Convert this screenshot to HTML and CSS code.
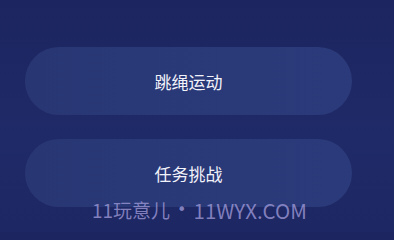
FILE: index.html
```html
<!DOCTYPE html>
<html lang="zh">
<head>
<meta charset="utf-8">
<link rel="stylesheet" href="styles.css">
</head>
<body>
<div class="screen">
  <div class="menu">
    <button class="pill">跳绳运动</button>
    <button class="pill">任务挑战</button>
  </div>
  <div class="watermark"><span class="cn">11玩意儿</span><span class="dot">•</span><span class="en">11WYX.COM</span></div>
</div>
</body>
</html>
```
FILE: styles.css
```css
html, body {
  margin: 0;
  padding: 0;
}
body {
  width: 394px;
  height: 232px;
  overflow: hidden;
  background: linear-gradient(180deg, #1c255f 0%, #1f2a68 60%, #1d2763 100%);
  font-family: "Noto Sans CJK SC", "Noto Sans", sans-serif;
}
.screen {
  position: relative;
  width: 394px;
  height: 232px;
}
.menu {
  display: flex;
  flex-direction: column;
  gap: 24px;
  padding: 47px 0 0 25px;
}
.pill {
  width: 327px;
  height: 68px;
  border: none;
  border-radius: 34px;
  background: linear-gradient(90deg, #283774 0%, #2b3a7a 100%);
  color: #f2f3fa;
  font-family: "Noto Sans CJK SC", "Noto Sans", sans-serif;
  font-size: 17px;
  padding: 0;
}
.watermark {
  position: absolute;
  left: 92px;
  top: 195px;
  display: flex;
  align-items: center;
  gap: 7px;
  color: rgba(158, 152, 214, 0.78);
  font-family: "Noto Sans CJK SC", "Noto Sans", sans-serif;
  line-height: 30px;
  white-space: nowrap;
}
.cn {
  font-size: 19px;
}
.en {
  font-size: 20.5px;
}
.dot {
  font-family: "DejaVu Sans", sans-serif;
  font-size: 16px;
}
```
